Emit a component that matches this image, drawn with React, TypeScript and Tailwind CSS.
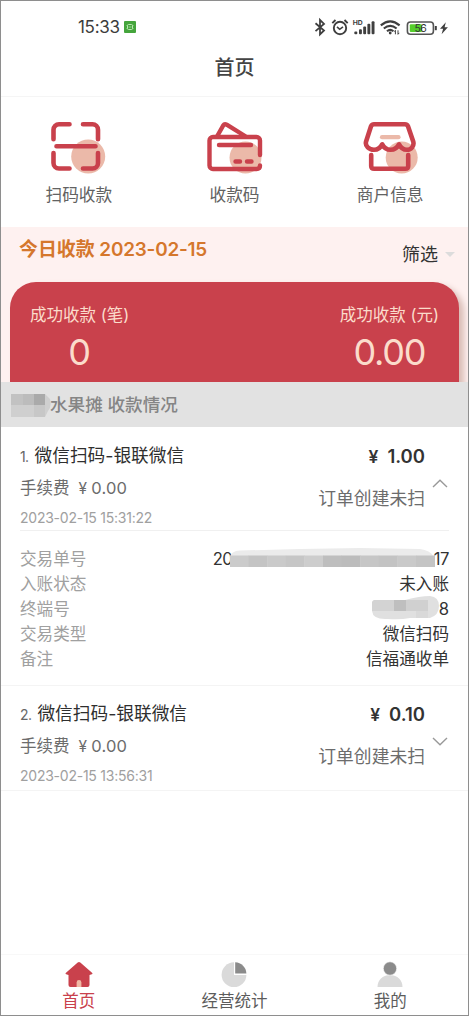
import React from 'react';

interface Order {
  index: number;
  title: string;
  amount: string;
  time: string;
  open: boolean;
}

const orders: Order[] = [
  { index: 1, title: '微信扫码-银联微信', amount: '1.00', time: '2023-02-15 15:31:22', open: true },
  { index: 2, title: '微信扫码-银联微信', amount: '0.10', time: '2023-02-15 13:56:31', open: false },
];

const RED = '#c9414c';
const PEACH = '#ebb9a9';

const StatusBar = () => (
  <div className="h-[52px] shrink-0 flex items-center justify-between pl-[77px] pr-[19px] text-[#3c3c3c]">
    <div className="flex items-center gap-[4px]">
      <span className="text-[17px] leading-5 tracking-[-0.3px]">15:33</span>
      <svg width="12" height="12" viewBox="0 0 12 12" fill="none">
        <rect width="12" height="12" rx="1" fill="#45a53c" />
        <rect x="3.5" y="3.5" width="5" height="5" rx="1" stroke="#b9e8b0" />
        <path d="M4.5 6h3M2.5 4.5h1M2.5 7.5h1M8.5 4.5h1M8.5 7.5h1" stroke="#b9e8b0" strokeWidth=".7" />
      </svg>
    </div>
    <svg width="135" height="20" viewBox="0 0 135 20" fill="none" stroke="#3f3f3f">
      {/* bluetooth */}
      <path d="M1.5 6.3 10 13.5 6 17.3V3L10 6.9 1.5 14.1" strokeWidth="1.8" />
      {/* alarm */}
      <circle cx="26" cy="11" r="6.2" strokeWidth="1.9" />
      <path d="M23 9.8 25.7 12.3 29 9.8" strokeWidth="1.6" />
      <path d="M18.3 6.2 21.5 3M33.7 6.2 30.5 3" strokeWidth="1.9" />
      {/* signal */}
      <g fill="#3f3f3f" stroke="none">
        <rect x="40.3" y="14.4" width="3" height="2.8" rx="1" />
        <rect x="45" y="12.2" width="2.9" height="5" rx="1" />
        <rect x="49.2" y="9.6" width="2.9" height="7.6" rx="1" />
        <rect x="53.4" y="6.8" width="2.9" height="10.4" rx="1" />
        <rect x="57.6" y="4.2" width="2.9" height="13" rx="1" />
        <text x="38.8" y="8.2" fontSize="6.8" fontWeight="700">HD</text>
      </g>
      {/* wifi */}
      <g strokeWidth="2.1">
        <path d="M66.8 8.4q9.4-8 18.8 0" />
        <path d="M69.8 11.5q6.4-5.4 12.8 0" />
        <path d="M73 14.2q3.2-2.8 6.4 0" />
      </g>
      <circle cx="76.2" cy="16" r="1.4" fill="#3f3f3f" stroke="none" />
      <path d="M81.4 17.3v-4l-1.2 1.4M84 13.3v4l1.2-1.4" strokeWidth="1" />
      {/* battery */}
      <rect x="93.4" y="5" width="26" height="12.2" rx="3" stroke="#555" strokeWidth="1.6" />
      <rect x="95.8" y="7.2" width="12.2" height="7.9" rx="1" fill="#55ce2c" stroke="none" />
      <text x="100.4" y="14.9" fontSize="10.5" fill="#333" stroke="none" letterSpacing="-.5">56</text>
      <path d="M121.8 9v4.2" strokeWidth="2" />
      {/* charging */}
      <path d="M131.8 5.2 126 11.800h3.100L127.600 17.300 133.900 10.200h-3.300Z" fill="#3f3f3f" stroke="none" />
    </svg>
  </div>
);

const ScanIcon = () => (
  <svg width="56" height="54" viewBox="0 0 56 54" fill="none" stroke={RED} strokeWidth="4.6" strokeLinecap="round">
    <circle cx="38.2" cy="35.5" r="17" fill={PEACH} stroke="none" />
    <path d="M19.5 3.3H9a5.5 5.5 0 0 0-5.5 5.5v9.5M33 3.3h9.5A5.5 5.5 0 0 1 48 8.8v9.5M3.5 32v10A5.5 5.5 0 0 0 9 47.5h10.5M33 47.5h9.5A5.5 5.5 0 0 0 48 42V32M6.5 25.3h39" />
  </svg>
);

const WalletIcon = () => (
  <svg width="56" height="54" viewBox="0 0 56 54" fill="none" stroke={RED} strokeWidth="4.4" strokeLinecap="round" strokeLinejoin="round">
    <circle cx="38.5" cy="36.5" r="16" fill={PEACH} stroke="none" />
    <path d="M53 34V19.500a3.500 3.500 0 0 0-3.500-3.500H6a3.500 3.500 0 0 0-3.500 3.500v25A3.500 3.500 0 0 0 6 48h43.500q3.500 0 3.500-3.500" />
    <path d="M10 15.500 16.200 4.500q1.300-2 3.500-.8L38 15" />
    <path d="M12 24h32M28.500 40.500h4.500M40 40.500h4.500" />
  </svg>
);

const ShopIcon = () => (
  <svg width="56" height="54" viewBox="0 0 56 54" fill="none" stroke={RED} strokeWidth="4.6" strokeLinecap="round" strokeLinejoin="round">
    <circle cx="38.7" cy="36.5" r="16" fill={PEACH} stroke="none" />
    <path d="M8.200 34V45q0 2.800 3 2.800h31q3 0 3-2.800V34" />
    <path d="M11 3.300h31q2 0 3 2l5.300 15.500c1 4-2 8-6.300 8-4 0-6.500-2.200-8-5.500-1.500 3.300-5 5.500-8.500 5.500s-6.800-2.200-8.300-5.500c-1.500 3.300-4.700 5.500-8.200 5.500C6 28.800 2 25 3 20.800L8 5.300q1-2 3-2Z" />
    <path d="M19 16.200h16.500" stroke={PEACH} strokeWidth="4.2" />
  </svg>
);

const shortcuts = [
  { label: '扫码收款', icon: <ScanIcon />, shift: 'pr-px' },
  { label: '收款码', icon: <WalletIcon />, shift: 'pl-[2px]' },
  { label: '商户信息', icon: <ShopIcon />, shift: 'pl-[2px]' },
];

const tabs = [
  {
    label: '首页',
    active: true,
    icon: (
      <svg width="28" height="28" viewBox="0 0 28 28">
        <path d="M3.500 14V24a2 2 0 0 0 2 2h17a2 2 0 0 0 2-2V14l2.300-.8a.9.900 0 0 0 .2-1.500L15.300 1.500a2 2 0 0 0-2.600 0L1 11.700a.9.900 0 0 0 .2 1.500Z" fill={RED} />
        <path d="M11.600 26v-4.500a2.400 2.400 0 0 1 4.800 0V26Z" fill="#f0b9a5" />
      </svg>
    ),
  },
  {
    label: '经营统计',
    active: false,
    icon: (
      <svg width="28" height="28" viewBox="0 0 28 28">
        <circle cx="14" cy="13.7" r="12.4" fill="#dadada" />
        <path d="M14 0h14v14H14Z" fill="#fff" />
        <path d="M15.200 1.200A11.700 11.700 0 0 1 26.400 12.600H15.200Z" fill="#8b8b8b" />
      </svg>
    ),
  },
  {
    label: '我的',
    active: false,
    icon: (
      <svg width="28" height="28" viewBox="0 0 28 28">
        <path d="M1.500 26c0-7 5-12 12.500-12s12.500 5 12.500 12Z" fill="#dadada" />
        <circle cx="14" cy="7.5" r="6.7" fill="#8b8b8b" stroke="#fff" strokeWidth=".6" />
      </svg>
    ),
  },
];

const maskShades = ['#cbcbcb', '#c4c4c4', '#cacaca', '#c6c6c6', '#cdcdcd', '#bebebe', '#bcbcbc', '#c6c6c6', '#c3c3c3', '#c9c9c9', '#c4c4c4'];

// Pixelated strip that hides the middle of the order number
const NumberMask = () => (
  <svg width="205" height="26" viewBox="0 0 205 26" className="-ml-[2px] -mr-px">
    <path d="M0 10Q1 4 10 3.500L70 2 130 1 190 2Q200 3 204 10Z" fill="#ebebeb" />
    {maskShades.map((c, i) => (
      <rect key={i} x={i * 18.6} y="8.5" width="19" height="11.5" fill={c} />
    ))}
  </svg>
);

const TerminalMask = () => (
  <svg width="67" height="25" viewBox="0 0 67 25" className="-mt-[3px]">
    <path d="M3 4h30Q48 0 58 0q9 1 9 10t-9 12H38Q28 24 16 23 1 24 0 15V7q0-3 3-3Z" fill="#e0e0e0" />
    <path d="M2 4h20v11H0V6Z" fill="#d3d3d3" />
    <path d="M22 4h12v11H22Z" fill="#bfbfbf" />
    <path d="M34 4h22v11H34Z" fill="#d0d0d0" />
    <path d="M44 15h12v7H44Z" fill="#d9d9d9" />
  </svg>
);

const details: { label: string; value: React.ReactNode }[] = [
  { label: '交易单号', value: <><span className="tracking-[-0.8px]">20</span><NumberMask /><span className="tracking-[-0.5px]">17</span></> },
  { label: '入账状态', value: '未入账' },
  { label: '终端号', value: <><TerminalMask /><span>8</span></> },
  { label: '交易类型', value: '微信扫码' },
  { label: '备注', value: '信福通收单' },
];

const OrderItem: React.FC<{ order: Order }> = ({ order }) => (
  <div className="border-b border-[#f4f4f4]">
    <div className={`mx-[19px] h-[104px] flex justify-between ${order.open ? 'border-b border-[#f0f0f0] pt-[15px]' : 'pt-[14px]'}`}>
      <div>
        <div className="flex items-baseline gap-[6px] h-7 leading-7">
          <span className="text-[14px] tracking-[-0.6px] text-[#666]">{order.index}.</span>
          <span className="text-[17.7px] text-[#2f2f2f]">{order.title}</span>
        </div>
        <div className="flex mt-1 h-7 leading-7 text-[#6c6c6c]">
          <span className="text-[16.5px]">手续费</span>
          <span className="ml-[9px] text-[16.5px] tracking-[0.2px]"><span className="mr-[4px] text-[15.5px]">¥</span>0.00</span>
        </div>
        <div className="mt-[6px] leading-5 text-[14px] tracking-[-0.24px] text-[#a0a0a0]">{order.time}</div>
      </div>
      <div className="flex">
        <div className="text-right">
          <div className="h-7 leading-7 text-[18.5px] font-semibold text-[#333]">
            <span className="mr-[9px] text-[17.5px]">¥</span>{order.amount}
          </div>
          <div className="mt-[15px] h-7 leading-7 text-[17.8px] text-[#6c6c6c]">订单创建未扫</div>
        </div>
        <svg width="16" height="9" viewBox="0 0 16 9" className="ml-[7px] mr-px mt-[37px]" fill="none" stroke="#999" strokeWidth="1.4">
          {order.open ? <path d="M1 8 8 1.200 15 8" /> : <path d="M1 1 8 7.800 15 1" />}
        </svg>
      </div>
    </div>
    {order.open && (
      <div className="px-[19px] pt-[16px] h-[154px]">
        {details.map((row) => (
          <div key={row.label} className="h-[25px] flex items-center justify-between text-[16.6px] leading-[25px]">
            <span className="text-[#a0a0a0]">{row.label}</span>
            <span className="flex items-center text-[#333]">{row.value}</span>
          </div>
        ))}
      </div>
    )}
  </div>
);

const App: React.FC = () => {
  return (
    <div className="h-[1016px] w-[469px] flex flex-col overflow-hidden border border-[#8e8e8e] bg-white font-[Inter,'Noto_Sans_CJK_SC',sans-serif]">
      <StatusBar />
      <header className="h-11 shrink-0 flex justify-center border-b border-[#f5f5f5] pt-px text-[20px] leading-7 font-medium text-[#444]">
        首页
      </header>

      <div className="h-[130px] shrink-0 grid grid-cols-3 pt-6">
        {shortcuts.map((s) => (
          <div key={s.label} className="flex flex-col items-center">
            <div className={s.shift}>{s.icon}</div>
            <span className="mt-2 leading-6 text-[16.7px] text-[#626262]">{s.label}</span>
          </div>
        ))}
      </div>

      {/* Today summary */}
      <div className="h-[155px] shrink-0 flex flex-col overflow-hidden bg-[#fef1f0]">
        <div className="h-[55px] shrink-0 flex justify-between pl-[18px] pr-[13px]">
          <div className="pt-[9px] leading-7 text-[18.9px] font-semibold text-[#d5772c]">
            今日收款 <span className="tracking-[-0.2px]">2023-02-15</span>
          </div>
          <div className="flex items-center text-[18px] leading-7 text-[#333]">
            筛选
            <span className="ml-[7px] border-x-[5px] border-t-[5px] border-x-transparent border-t-[#dcdcdc]" />
          </div>
        </div>
        <div className="h-[120px] shrink-0 mx-[9px] rounded-t-[26px] bg-[#c9414c] px-5 pt-[21px] flex justify-between text-[#fbdccb] shadow-[5px_4px_6px_#d9bcb5]">
          <div className="flex flex-col items-center">
            <span className="text-[16.5px] leading-6">成功收款 (笔)</span>
            <span className="text-[36px] leading-[50px]">0</span>
          </div>
          <div className="flex flex-col items-center">
            <span className="text-[16.5px] leading-6">成功收款 (元)</span>
            <span className="text-[36px] leading-[50px] tracking-[-1.2px]">0.00</span>
          </div>
        </div>
      </div>

      <div className="h-[45px] shrink-0 flex items-center bg-[#e2e2e2] pl-[10px] pt-px text-[17.6px] font-medium text-[#858585]">
        <svg width="40" height="23" viewBox="0 0 40 23" className="-mr-px">
          <path d="M0 0h34l5 5q2 7-2 12l-3 6H0Z" fill="#cfcfcf" />
          <path d="M0 0h12v11H0Z" fill="#c2c2c2" />
          <path d="M12 0h11v11H12Z" fill="#bcbcbc" />
          <path d="M23 0h11v11H23Z" fill="#aaa" />
          <path d="M23 11h11v12H23Z" fill="#c7c7c7" />
        </svg>
        <span className="pt-px">水果摊 收款情况</span>
      </div>

      <main className="flex-1">
        {orders.map((o) => (
          <OrderItem key={o.index} order={o} />
        ))}
      </main>

      <nav className="h-[61px] shrink-0 grid grid-cols-3 border-t border-[#f8f8f8] pt-[6px]">
        {tabs.map((t) => (
          <div key={t.label} className={`flex flex-col items-center text-[16.5px] leading-6 ${t.active ? 'text-[#c9414c]' : 'text-[#5c5c5c]'}`}>
            {t.icon}
            <span>{t.label}</span>
          </div>
        ))}
      </nav>
    </div>
  );
};

export default App;
